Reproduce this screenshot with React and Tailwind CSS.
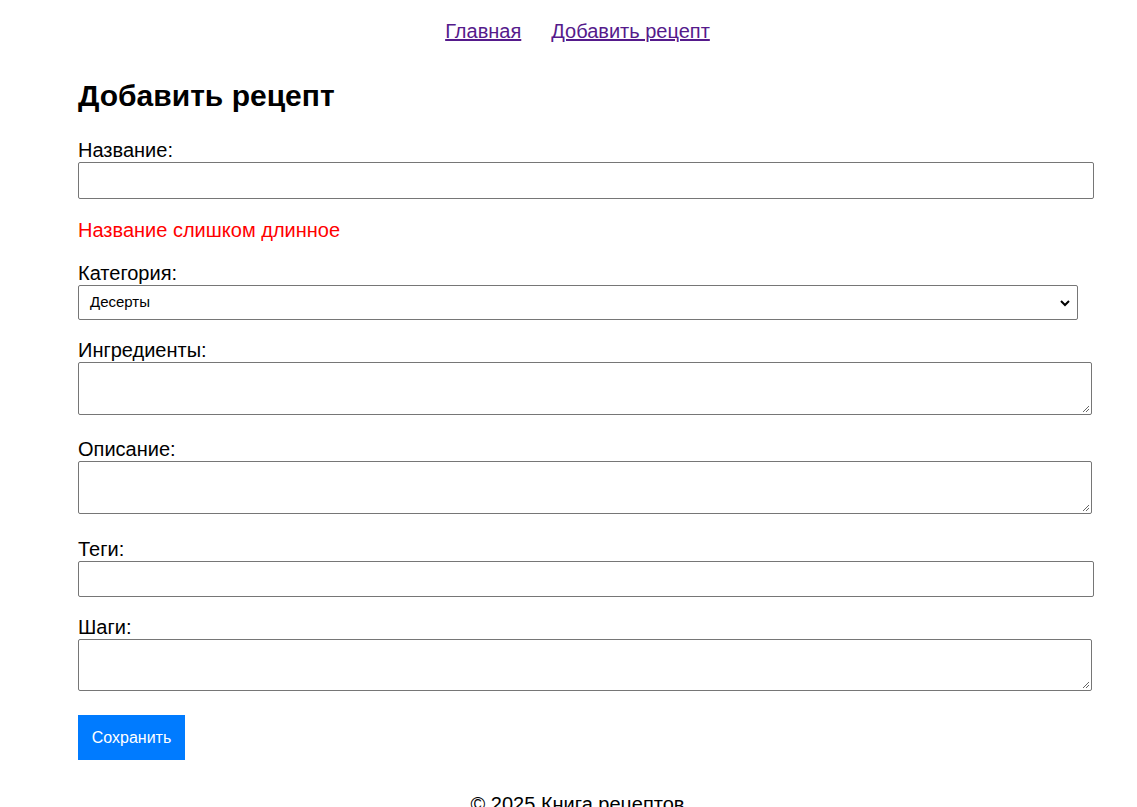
export default function App() {
  const label = "block h-[23px] text-[20px] leading-[23px] text-black";
  const field = "block border border-[#767676] bg-white rounded-[2px]";
  return (
    <div className="min-h-[807px] bg-white text-black" style={{ fontFamily: '"Liberation Sans", Arial, sans-serif' }}>
      <nav className="flex justify-center gap-[30px] pt-[20px] pl-[18px] text-[20px] leading-[23px]">
        <a href="#" className="text-[#551a8b] underline">Главная</a>
        <a href="#" className="text-[#551a8b] underline">Добавить рецепт</a>
      </nav>
      <main className="pl-[78px]">
        <h2 className="mt-[36px] text-[30px] font-bold leading-[34px]">Добавить рецепт</h2>
        <form className="mt-[26px]">
          <label className={label}>Название:</label>
          <div className={field + " w-[1016px] h-[37px]"}></div>
          <p className="mt-[20px] h-[23px] text-[20px] leading-[23px] text-[#ff0000]">Название слишком длинное</p>
          <label className={label + " mt-[20px]"}>Категория:</label>
          <div className={field + " w-[1000px] h-[35px] flex items-center justify-between pl-[11px] pr-[6px]"}>
            <span className="text-[15px]">Десерты</span>
            <svg width="12" height="12" viewBox="0 0 12 12"><path d="M2 4 L6 8 L10 4" fill="none" stroke="black" strokeWidth="2" /></svg>
          </div>
          <label className={label + " mt-[19px]"}>Ингредиенты:</label>
          <div className={field + " relative w-[1014px] h-[53px]"}>
            <svg className="absolute right-[1px] bottom-[1px]" width="10" height="10" viewBox="0 0 10 10"><path d="M9 3 L3 9 M9 6 L6 9" stroke="#666" strokeWidth="1" /></svg>
          </div>
          <label className={label + " mt-[23px]"}>Описание:</label>
          <div className={field + " relative w-[1014px] h-[53px]"}>
            <svg className="absolute right-[1px] bottom-[1px]" width="10" height="10" viewBox="0 0 10 10"><path d="M9 3 L3 9 M9 6 L6 9" stroke="#666" strokeWidth="1" /></svg>
          </div>
          <label className={label + " mt-[24px]"}>Теги:</label>
          <div className={field + " w-[1016px] h-[36px]"}></div>
          <label className={label + " mt-[19px]"}>Шаги:</label>
          <div className={field + " relative w-[1014px] h-[52px]"}>
            <svg className="absolute right-[1px] bottom-[1px]" width="10" height="10" viewBox="0 0 10 10"><path d="M9 3 L3 9 M9 6 L6 9" stroke="#666" strokeWidth="1" /></svg>
          </div>
          <button type="button" className="mt-[24px] block w-[107px] h-[45px] bg-[#007bff] text-white text-[16px]">Сохранить</button>
        </form>
      </main>
      <footer className="mt-[33px] pl-[18px] text-center text-[20px] leading-[23px]">© 2025 Книга рецептов</footer>
    </div>
  );
}
